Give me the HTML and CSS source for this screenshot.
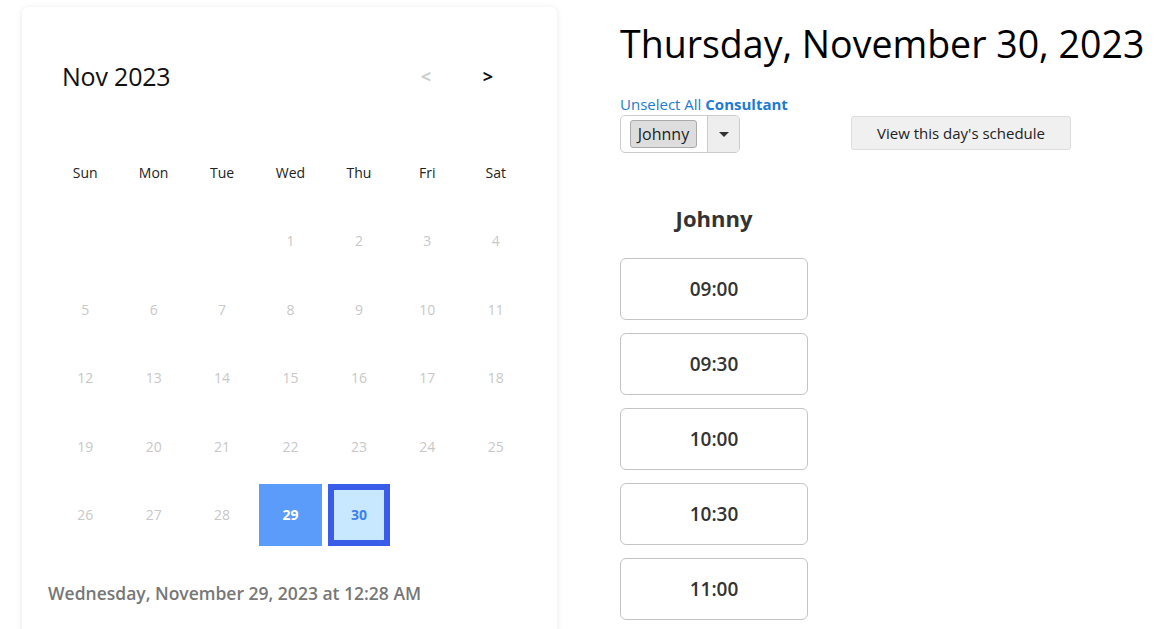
FILE: index.html
```html
<!DOCTYPE html>
<html>
<head>
<meta charset="utf-8">
<link rel="stylesheet" href="styles.css">
</head>
<body>
<div class="page">
  <div class="card">
    <div class="cal-head">
      <div class="month">Nov 2023</div>
      <div class="nav">
        <span class="arrow prev">&lt;</span>
        <span class="arrow next">&gt;</span>
      </div>
    </div>
    <div class="grid">
      <div class="wd">Sun</div><div class="wd">Mon</div><div class="wd">Tue</div><div class="wd">Wed</div><div class="wd">Thu</div><div class="wd">Fri</div><div class="wd">Sat</div>
      <div class="d"></div><div class="d"></div><div class="d"></div><div class="d">1</div><div class="d">2</div><div class="d">3</div><div class="d">4</div>
      <div class="d">5</div><div class="d">6</div><div class="d">7</div><div class="d">8</div><div class="d">9</div><div class="d">10</div><div class="d">11</div>
      <div class="d">12</div><div class="d">13</div><div class="d">14</div><div class="d">15</div><div class="d">16</div><div class="d">17</div><div class="d">18</div>
      <div class="d">19</div><div class="d">20</div><div class="d">21</div><div class="d">22</div><div class="d">23</div><div class="d">24</div><div class="d">25</div>
      <div class="d">26</div><div class="d">27</div><div class="d">28</div><div class="d today">29</div><div class="d selected">30</div><div class="d"></div><div class="d"></div>
    </div>
    <div class="now">Wednesday, November 29, 2023 at 12:28 AM</div>
  </div>
  <div class="right">
    <h1 class="title">Thursday, November 30, 2023</h1>
    <div class="links"><span class="unsel">Unselect All</span> <span class="cons">Consultant</span></div>
    <div class="controls">
      <div class="select">
        <div class="sel-items"><span class="tag">Johnny</span></div>
        <div class="sel-drop"><span class="caret"></span></div>
      </div>
      <button class="btn">View this day's schedule</button>
    </div>
    <div class="staff">
      <div class="staff-name">Johnny</div>
      <div class="slot">09:00</div>
      <div class="slot">09:30</div>
      <div class="slot">10:00</div>
      <div class="slot">10:30</div>
      <div class="slot">11:00</div>
    </div>
  </div>
</div>
</body>
</html>
```

FILE: styles.css
```css
html, body {
  margin: 0;
  padding: 0;
  background: #fff;
  height: 629px;
  overflow: hidden;
}
body {
  font-family: "Open Sans", "Noto Sans", sans-serif;
  color: #222;
}
.page {
  display: flex;
  align-items: flex-start;
  padding: 7px 0 0 22px;
}
.card {
  width: 535px;
  box-sizing: border-box;
  padding: 49px 27px 40px 29px;
  border-radius: 6px;
  box-shadow: 0 1px 6px rgba(0, 0, 0, 0.10);
  background: #fff;
  flex: none;
}
.cal-head {
  display: flex;
  align-items: center;
  justify-content: space-between;
  height: 40px;
  padding-left: 11px;
}
.month {
  font-size: 25px;
  color: #111;
  letter-spacing: -0.2px;
}
.nav {
  display: flex;
  gap: 48px;
  margin-right: 35px;
}
.arrow {
  font-size: 18px;
  font-weight: 700;
  width: 14px;
  text-align: center;
}
.prev { color: #ccc; }
.next { color: #111; }
.grid {
  margin-top: 42px;
  display: grid;
  grid-template-columns: repeat(7, 1fr);
  grid-auto-rows: 68.5px;
}
.wd, .d {
  display: flex;
  align-items: center;
  justify-content: center;
  font-size: 14px;
  margin: 3px;
}
.wd { color: #222; }
.d { color: #c8c8c8; }
.d.today {
  background: #5b9bf9;
  color: #fff;
  font-weight: 700;
}
.d.selected {
  background: #c8e8ff;
  color: #3d7ff0;
  font-weight: 700;
  border: 6px solid #3a5de9;
}
.now {
  margin-top: 32px;
  margin-left: -3px;
  font-size: 17.5px;
  font-weight: 600;
  color: #777;
  line-height: 24px;
}
.right {
  margin-left: 63px;
  display: flex;
  flex-direction: column;
}
.title {
  margin: 11px 0 0;
  font-size: 37.5px;
  font-weight: 400;
  line-height: 52px;
  color: #000;
  white-space: nowrap;
}
.links {
  margin-top: 24px;
  font-size: 15px;
  line-height: 21px;
  color: #1d7ad4;
}
.cons { font-weight: 700; }
.controls {
  display: flex;
  align-items: flex-start;
  margin-top: 0;
}
.select {
  display: flex;
  width: 120px;
  height: 38px;
  box-sizing: border-box;
  border: 1px solid #ccc;
  border-radius: 5px;
  overflow: hidden;
}
.sel-items {
  flex: 1;
  display: flex;
  align-items: center;
  padding-left: 9px;
}
.tag {
  display: inline-flex;
  align-items: center;
  justify-content: center;
  width: 67px;
  height: 28px;
  box-sizing: border-box;
  background: #ddd;
  border: 1px solid #aaa;
  border-radius: 3px;
  font-size: 16px;
  color: #222;
}
.sel-drop {
  width: 31px;
  background: #eee;
  border-left: 1px solid #ccc;
  display: flex;
  align-items: center;
  justify-content: center;
}
.caret {
  width: 0;
  height: 0;
  border-left: 5px solid transparent;
  border-right: 5px solid transparent;
  border-top: 5px solid #333;
}
.btn {
  margin: 1px 0 0 111px;
  width: 220px;
  height: 34px;
  background: #f0f0f0;
  border: 1px solid #ddd;
  border-radius: 3px;
  font-family: "Open Sans", "Noto Sans", sans-serif;
  font-size: 15px;
  color: #222;
  padding: 0;
}
.staff {
  width: 188px;
  display: flex;
  flex-direction: column;
  gap: 13px;
  margin-top: 50px;
}
.staff-name {
  text-align: center;
  font-size: 22px;
  font-weight: 700;
  color: #333;
  line-height: 30px;
  margin-bottom: 12px;
}
.slot {
  height: 62px;
  box-sizing: border-box;
  border: 1px solid #c4c4c4;
  border-radius: 6px;
  display: flex;
  align-items: center;
  justify-content: center;
  font-size: 19px;
  font-weight: 600;
  color: #333;
  flex: none;
}
```
